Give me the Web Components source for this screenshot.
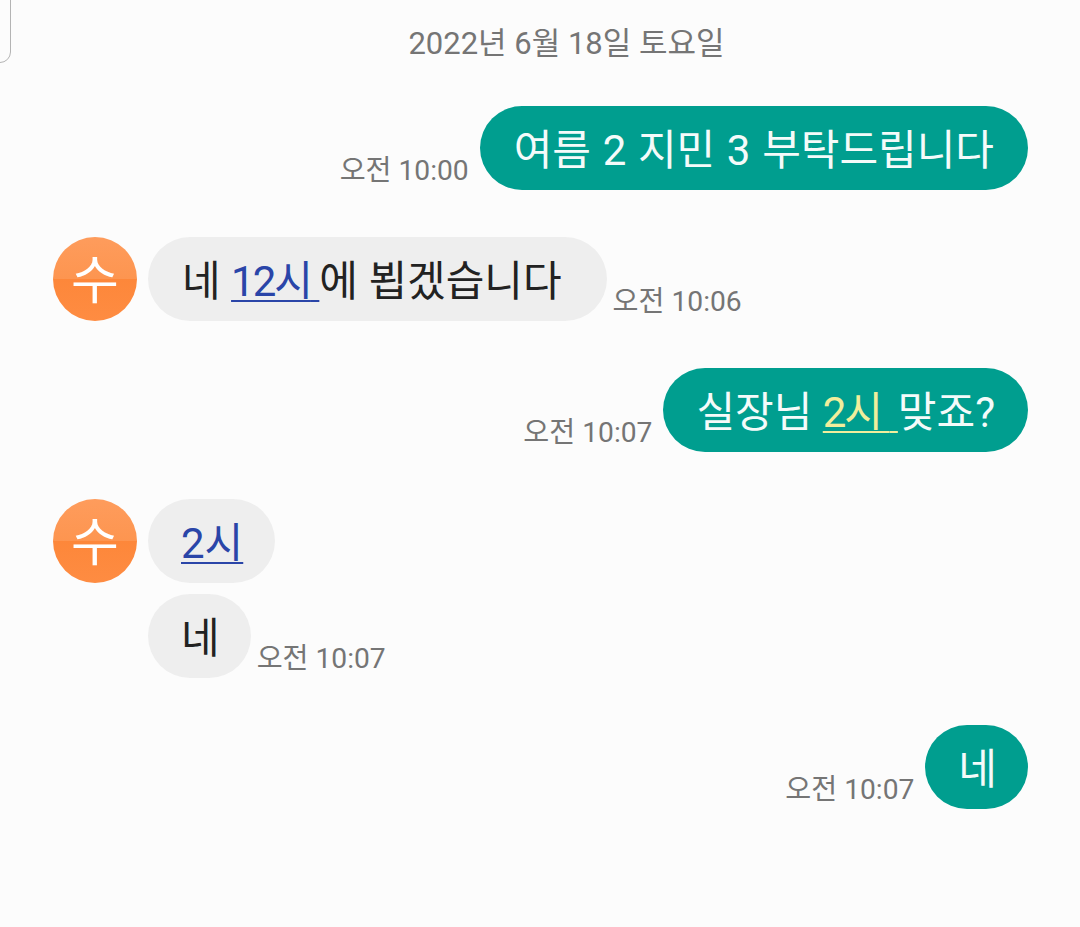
<!DOCTYPE html>
<html lang="ko">
<head>
<meta charset="utf-8">
<title>메시지</title>
<style>
  html, body { margin: 0; height: 100%; }
  body {
    background: #fcfcfc;
    font-family: "Roboto", "Noto Sans CJK KR", sans-serif;
    overflow: hidden;
  }
</style>
</head>
<body>
<chat-thread>
  <chat-date>2022년 6월 18일 토요일</chat-date>

  <chat-group mine>
    <chat-row mine time="오전 10:00"><chat-bubble mine spaced>여름 2 지민 3 부탁드립니다</chat-bubble></chat-row>
  </chat-group>

  <chat-group>
    <chat-row avatar="수" time="오전 10:06"><chat-bubble wide>네 <chat-link tight>12시</chat-link>에 뵙겠습니다</chat-bubble></chat-row>
  </chat-group>

  <chat-group mine>
    <chat-row mine time="오전 10:07"><chat-bubble mine snug>실장님 <chat-link mine tight>2시&nbsp;</chat-link>맞죠?</chat-bubble></chat-row>
  </chat-group>

  <chat-group>
    <chat-row avatar="수"><chat-bubble narrow><chat-link>2시</chat-link></chat-bubble></chat-row>
    <chat-row indent time="오전 10:07"><chat-bubble narrow tiny>네</chat-bubble></chat-row>
  </chat-group>

  <chat-group mine>
    <chat-row mine time="오전 10:07"><chat-bubble mine narrow tiny>네</chat-bubble></chat-row>
  </chat-group>
</chat-thread>

<script>
class ChatThread extends HTMLElement {
    constructor() {
        super();
        this.attachShadow({mode : "open"});
        this.shadowRoot.innerHTML = `
            <style>
                :host {
                    display: flex;
                    flex-direction: column;
                    position: relative;
                    height: 927px;
                    box-sizing: border-box;
                    padding: 0 52px 0 53px;
                }
                .corner {
                    position: absolute;
                    left: -12px;
                    top: -12px;
                    width: 21px;
                    height: 73px;
                    border: 1.5px solid #b4b4b4;
                    border-radius: 11px;
                }
            </style>
            <div class="corner"></div>
            <slot></slot>
        `;
    }
}

class ChatDate extends HTMLElement {
    constructor() {
        super();
        this.attachShadow({mode : "open"});
        this.shadowRoot.innerHTML = `
            <style>
                :host {
                    display: block;
                    height: 106px;
                    box-sizing: border-box;
                    padding-top: 23px;
                    padding-left: 52px;
                    text-align: center;
                    font-size: 31px;
                    line-height: 42px;
                    color: #757575;
                }
            </style>
            <slot></slot>
        `;
    }
}

class ChatGroup extends HTMLElement {
    constructor() {
        super();
        this.attachShadow({mode : "open"});
        this.shadowRoot.innerHTML = `
            <style>
                :host {
                    display: flex;
                    flex-direction: column;
                    gap: 11px;
                    margin-bottom: 47px;
                }
            </style>
            <slot></slot>
        `;
    }
}

class ChatRow extends HTMLElement {
    constructor() {
        super();
        this.attachShadow({mode : "open"});
    }

    connectedCallback() {
        const mine = this.hasAttribute("mine");
        const time = this.getAttribute("time");
        const avatar = this.getAttribute("avatar");
        const timeHtml = time ? `<span class="time">${time}</span>` : "";
        const avatarHtml = avatar ? `<span class="avatar">${avatar}</span>` : "";

        this.shadowRoot.innerHTML = `
            <style>
                :host {
                    display: flex;
                    align-items: flex-end;
                    justify-content: ${mine ? "flex-end" : "flex-start"};
                }
                :host([indent]) { padding-left: 95px; }
                .avatar {
                    flex: none;
                    width: 84px;
                    height: 84px;
                    box-sizing: border-box;
                    padding-top: 6px;
                    margin-right: 11px;
                    border-radius: 50%;
                    display: flex;
                    align-items: center;
                    justify-content: center;
                    color: #fff;
                    font-size: 52px;
                    line-height: 1;
                    background: linear-gradient(180deg, #fe9c5c 0%, #fd9550 50%, #fd873a 50%, #fe8c42 100%);
                }
                .time {
                    font-size: 28.2px;
                    line-height: 38px;
                    color: #757575;
                    white-space: nowrap;
                    margin: ${mine ? "0 11px 0 0" : "0 0 0 6px"};
                }
            </style>
            ${mine ? timeHtml : avatarHtml}
            <slot></slot>
            ${mine ? "" : timeHtml}
        `;
    }
}

class ChatBubble extends HTMLElement {
    constructor() {
        super();
        this.attachShadow({mode : "open"});
        this.shadowRoot.innerHTML = `
            <style>
                :host {
                    display: block;
                    height: 84px;
                    box-sizing: border-box;
                    padding: 0 34px;
                    border-radius: 42px;
                    background: #eeeeee;
                    color: #222222;
                    font-size: 42px;
                    line-height: 90px;
                    white-space: nowrap;
                }
                :host([mine]) {
                    background: #009e8f;
                    color: #f4fbfa;
                }
                :host([spaced]) { word-spacing: 1.25px; }
                :host([snug]) { padding: 0 33px; }
                :host([wide]) { padding-right: 45px; }
                :host([narrow]) { padding: 0 32px 0 33px; }
                :host([tiny]) { padding-right: 31px; }
            </style>
            <slot></slot>
        `;
    }
}

class ChatLink extends HTMLElement {
    constructor() {
        super();
        this.attachShadow({mode : "open"});
        this.shadowRoot.innerHTML = `
            <style>
                :host {
                    display: inline;
                    color: #2a45a8;
                    text-decoration: underline;
                    text-decoration-thickness: 2px;
                    text-underline-offset: 4px;
                }
                :host([mine]) { color: #f0ee9c; }
                :host([tight]) { letter-spacing: -2px; }
            </style>
            <slot></slot>
        `;
    }
}

customElements.define("chat-thread", ChatThread);
customElements.define("chat-date", ChatDate);
customElements.define("chat-group", ChatGroup);
customElements.define("chat-row", ChatRow);
customElements.define("chat-bubble", ChatBubble);
customElements.define("chat-link", ChatLink);
</script>
</body>
</html>
